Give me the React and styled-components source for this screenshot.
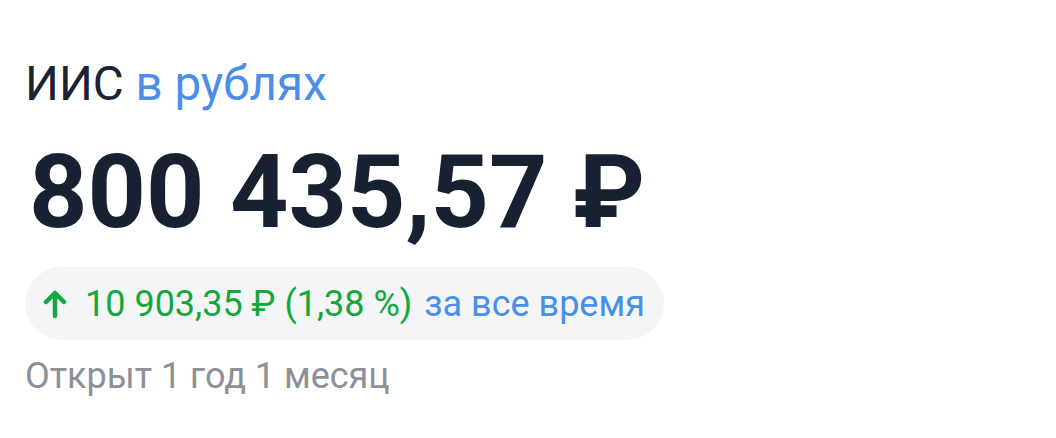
import React from 'react';
import styled, { createGlobalStyle } from 'styled-components';

const GlobalStyle = createGlobalStyle`
  html, body {
    margin: 0;
    padding: 0;
    background: #ffffff;
    font-family: Roboto, "Noto Sans", sans-serif;
  }
`;

const S = {};
S.Card = styled('div')`
  width: 1056px;
  height: 438px;
  box-sizing: border-box;
  padding: 56px 0 0 25px;
  display: flex;
  flex-direction: column;
  align-items: flex-start;
`;
S.Title = styled('div')`
  font-size: 47.5px;
  line-height: 56px;
  color: #1b2230;
  & > span {
    color: #4a8ee9;
  }
`;
S.Amount = styled('div')`
  margin: 25px 0 0 4px;
  font-size: 102px;
  font-weight: 700;
  line-height: 110px;
  color: #172131;
`;
S.Change = styled('div')`
  margin-top: 20px;
  height: 73px;
  box-sizing: border-box;
  padding: 0 19px 0 18px;
  border-radius: 37px;
  background: #f3f5f7;
  display: flex;
  align-items: center;
  font-size: 36px;
  color: #14a83b;
  & > svg {
    margin-right: 18px;
  }
`;
S.Period = styled('span')`
  margin-left: 12px;
  color: #4a8ee9;
`;
S.Opened = styled('div')`
  margin-top: 14px;
  font-size: 36px;
  line-height: 44px;
  color: #8d9096;
`;

const ArrowUp = () => (
  <svg width="24" height="30" viewBox="0 0 24 30" fill="none">
    <path d="M12 27V5M3 13l9-9 9 9" stroke="#14a83b" strokeWidth="4.5" strokeLinecap="round" strokeLinejoin="round" />
  </svg>
);

export default function App() {
  return (
    <>
      <GlobalStyle />
      <S.Card>
        <S.Title>ИИС <span>в рублях</span></S.Title>
        <S.Amount>800 435,57 ₽</S.Amount>
        <S.Change>
          <ArrowUp />
          <span>10 903,35 ₽ (1,38 %)</span>
          <S.Period>за все время</S.Period>
        </S.Change>
        <S.Opened>Открыт 1 год 1 месяц</S.Opened>
      </S.Card>
    </>
  );
}
